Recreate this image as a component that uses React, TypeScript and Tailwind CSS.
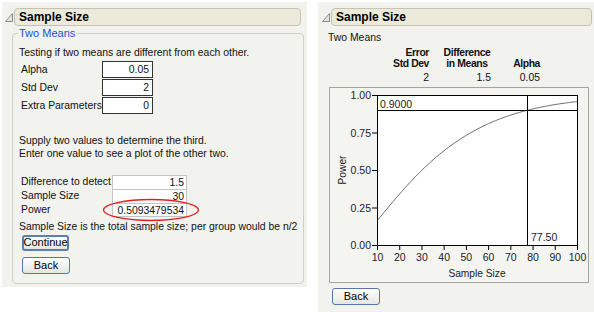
import React from 'react';

const font = { fontFamily: '"Liberation Sans", Arial, sans-serif' };

// normal cdf (Abramowitz-Stegun)
const phi = (x: number) => {
  const t = 1 / (1 + 0.2316419 * Math.abs(x));
  const d = 0.3989423 * Math.exp((-x * x) / 2);
  const p = d * t * (0.3193815 + t * (-0.3565638 + t * (1.781478 + t * (-1.821256 + t * 1.330274))));
  return x > 0 ? 1 - p : p;
};

// approx power of two-sample t test, sd 2, diff 1.5, alpha .05, total n
const power = (n: number) => {
  const df = n - 2;
  const z = 1.959964;
  const tc = z + (z ** 3 + z) / (4 * df) + (5 * z ** 5 + 16 * z ** 3 + 3 * z) / (96 * df * df);
  const delta = 0.375 * Math.sqrt(n);
  return phi((delta - tc) / Math.sqrt(1 + (tc * tc) / (2 * df)));
};

const px = (v: number) => 47.5 + ((v - 10) * 200) / 90;
const py = (p: number) => 157.5 - p * 150;

const Disclosure = () => (
  <svg width="8" height="10" viewBox="0 0 8 10" className="shrink-0">
    <polygon points="0.5,9.5 7.5,1.5 7.5,9.5" fill="#e4e4e0" stroke="#8a8a8a" strokeWidth="1" />
  </svg>
);

const Header = ({ width }: { width: number }) => (
  <div className="flex items-center">
    <Disclosure />
    <div
      className="ml-px h-[18px] rounded-[4px] border border-[#c6c4ae] bg-[#ebeadb] pl-[4px] text-[12px] font-bold leading-[16px] text-black"
      style={{ width }}
    >
      Sample Size
    </div>
  </div>
);

const Button = ({ label, focused }: { label: string; focused?: boolean }) => (
  <div
    className={
      'flex items-center justify-center rounded-[3px] bg-gradient-to-b from-white to-[#e6e6e0] text-[11px] text-black ' +
      (focused ? 'border-2 border-[#5a7fb4]' : 'border border-[#5578a8]')
    }
    style={{ width: focused ? 47 : 48, height: focused ? 16 : 17 }}
  >
    {label}
  </div>
);

const InputRow = ({ label, value }: { label: string; value: string }) => (
  <div className="flex h-[18px] items-center">
    <span className="w-[83px] whitespace-nowrap pl-[2px]">{label}</span>
    <div className="h-[17px] w-[51px] border border-[#333] bg-white pr-[3px] text-right leading-[15px]">{value}</div>
  </div>
);

const SolveRow = ({ label, value, last }: { label: string; value: string; last?: boolean }) => (
  <div className="flex h-[14px] items-center">
    <span className="w-[93px] whitespace-nowrap pl-[2px]">{label}</span>
    <div
      className={
        'h-[14px] w-[75px] border-x border-t border-[#c4c4c4] bg-white pr-[2px] text-right leading-[13px] ' +
        (last ? 'border-b' : '')
      }
    >
      {value}
    </div>
  </div>
);

const Chart = () => {
  const pts: string[] = [];
  for (let n = 10; n <= 100; n += 1) pts.push(`${px(n).toFixed(2)},${py(power(n)).toFixed(2)}`);
  const yt = [1, 0.75, 0.5, 0.25, 0];
  const xt = [10, 20, 30, 40, 50, 60, 70, 80, 90, 100];
  return (
    <svg width="258" height="194" viewBox="0 0 258 194" style={font}>
      <rect x="47.5" y="7.5" width="200" height="150" fill="white" />
      <polyline points={pts.join(' ')} fill="none" stroke="#6e6e6e" strokeWidth="1" />
      <line x1="47.5" y1="22.5" x2="247.5" y2="22.5" stroke="#000" />
      <line x1="197.5" y1="7.5" x2="197.5" y2="157.5" stroke="#000" />
      <rect x="47.5" y="7.5" width="200" height="150" fill="none" stroke="#000" />
      <text x="50" y="20" fontSize="10.5" fill="#222">0.9000</text>
      <text x="201" y="152.5" fontSize="10.5" fill="#222">77.50</text>
      {yt.map((v) => (
        <g key={v}>
          <line x1="42" y1={py(v)} x2="47.5" y2={py(v)} stroke="#000" />
          <text x="41" y={py(v) + 3.5} fontSize="10.5" textAnchor="end" fill="#222">
            {v.toFixed(2)}
          </text>
        </g>
      ))}
      {xt.map((v) => (
        <g key={v}>
          <line x1={px(v)} y1="157.5" x2={px(v)} y2="162" stroke="#000" />
          <text x={px(v)} y="173" fontSize="10.5" textAnchor="middle" fill="#222">
            {v}
          </text>
        </g>
      ))}
      <text x="147" y="189" fontSize="10.2" textAnchor="middle" fill="#222">
        Sample Size
      </text>
      <text x="0" y="0" fontSize="10.2" textAnchor="middle" fill="#222" transform="translate(15.5 82) rotate(-90)">
        Power
      </text>
    </svg>
  );
};

export default function App() {
  return (
    <div className="flex h-[312px] w-[594px] items-start overflow-hidden bg-white text-[10.4px] text-[#111]" style={font}>
      {/* left: input dialog */}
      <div className="ml-[2px] mt-[2px] h-[285px] w-[305px] bg-[#f2f2ee] pl-[3px] pt-[6px]">
        <Header width={287} />
        <fieldset className="ml-[7px] mt-px w-[288px] rounded-[4px] border border-[#cfcfc6] px-[6px] pb-[9px]">
          <legend className="ml-[-1px] px-[1px] text-[11px] leading-[13px] text-[#1c50dc]">Two Means</legend>
          <div className="mt-[6px] h-[13px] leading-[13px]">Testing if two means are different from each other.</div>
          <div className="mt-[1.5px]">
            <InputRow label="Alpha" value="0.05" />
            <InputRow label="Std Dev" value="2" />
            <InputRow label="Extra Parameters" value="0" />
          </div>
          <div className="mt-[19.5px] leading-[13px]">
            <div>Supply two values to determine the third.</div>
            <div>Enter one value to see a plot of the other two.</div>
          </div>
          <div className="relative mt-[14.5px]">
            <SolveRow label="Difference to detect" value="1.5" />
            <SolveRow label="Sample Size" value="30" />
            <SolveRow label="Power" value="0.5093479534" last />
            <svg className="absolute left-[83px] top-[23px]" width="98" height="24" viewBox="0 0 98 24">
              <ellipse cx="49" cy="12" rx="47.5" ry="10.5" fill="none" stroke="#e01e1e" strokeWidth="1.3" />
            </svg>
          </div>
          <div className="mt-[3.5px] h-[13px] whitespace-nowrap leading-[13px]">
            Sample Size is the total sample size; per group would be n/2
          </div>
          <div className="ml-[3px] mt-[1.5px] flex flex-col gap-[6px]">
            <Button label="Continue" focused />
            <Button label="Back" />
          </div>
        </fieldset>
      </div>

      {/* right: plot report */}
      <div className="ml-[11px] mt-[2px] h-[310px] w-[276px] bg-[#f2f2ee] pt-[6px]">
        <div className="pl-[4px]">
          <Header width={261} />
        </div>
        <div className="ml-[10px] mt-[4.5px] h-[13px] leading-[13px]">Two Means</div>
        <div className="mt-[3px] grid grid-cols-[111px_62px_49px] text-right leading-[11px]">
          <div className="font-bold tracking-[-0.4px]">Error</div>
          <div className="ml-auto w-[48px] text-center font-bold tracking-[-0.4px]">Difference</div>
          <div />
          <div className="font-bold tracking-[-0.4px]">Std Dev</div>
          <div className="ml-auto w-[48px] text-center font-bold tracking-[-0.4px]">in Means</div>
          <div className="font-bold tracking-[-0.4px]">Alpha</div>
          <div className="mt-[2px] leading-[13px]">2</div>
          <div className="mt-[2px] leading-[13px]">1.5</div>
          <div className="mt-[2px] leading-[13px]">0.05</div>
        </div>
        <div className="ml-[11px] mt-[3.5px] h-[196px] w-[260px] border border-[#a4a4a0] bg-[#f4f4f1]">
          <Chart />
        </div>
        <div className="ml-[14px] mt-[5px]">
          <Button label="Back" />
        </div>
      </div>
    </div>
  );
}
